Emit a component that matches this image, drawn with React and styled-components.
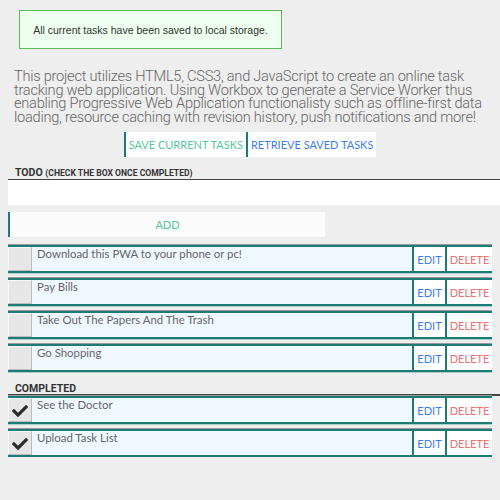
import React from 'react';
import styled, { createGlobalStyle } from 'styled-components';

const Global = createGlobalStyle`
  html, body { margin: 0; padding: 0; background: #eeeeee; overflow: hidden; }
  body { padding: 8px 0 0 8px; font-family: "Lato", "Liberation Sans", sans-serif; }
`;

const teal = '#1d7a74';

const Page = styled.div`
  width: 484px;
`;

const Alert = styled.div`
  width: 263px;
  height: 39px;
  margin: 2px 0 0 11px;
  box-sizing: border-box;
  border: 1px solid #5cb85c;
  background: #efffef;
  display: flex;
  align-items: center;
  justify-content: center;
  font-family: "Liberation Sans", Arial, sans-serif;
  font-size: 10.5px;
  color: #333;
`;

const Intro = styled.p`
  margin: 21px 0 0 6px;
  font-family: "Roboto", sans-serif;
  font-weight: 300;
  font-size: 14.6px;
  line-height: 13.5px;
  color: #666;
  letter-spacing: -0.25px;
  width: 488px;
`;

const Actions = styled.div`
  display: flex;
  justify-content: center;
  margin-top: 8px;
`;

const ActionButton = styled.button`
  height: 25px;
  border: none;
  border-left: 2px solid ${teal};
  background: #fff;
  padding: 0 3px 0 3px;
  font-family: "Lato", sans-serif;
  font-size: 11px;
  color: ${p => p.$color};
  cursor: pointer;
`;

const SectionTitle = styled.div`
  margin-top: ${p => p.$top}px;
  padding-left: 7px;
  font-family: "Roboto", "Liberation Sans", sans-serif;
  font-weight: 700;
  font-size: 10.5px;
  line-height: 10px;
  color: #333;
  border-bottom: ${p => p.$thick}px solid #444;
  margin-right: -8px;
  padding-bottom: ${p => p.$pad}px;

  small {
    font-size: 8.6px;
  }
`;

const TaskInput = styled.input`
  display: block;
  box-sizing: border-box;
  width: 492px;
  height: 25px;
  border: none;
  background: #fff;
  outline: none;
`;

const AddButton = styled.button`
  display: block;
  width: 317px;
  height: 25px;
  margin-top: 7px;
  border: none;
  border-left: 2px solid ${teal};
  background: #fbfbfb;
  font-family: "Lato", sans-serif;
  font-size: 11px;
  color: #55c79a;
`;

const List = styled.div`
  display: flex;
  flex-direction: column;
  gap: 5px;
  margin-top: ${p => p.$top}px;
`;

const Row = styled.div`
  display: flex;
  height: 28px;
  box-sizing: border-box;
  border-top: 2px solid ${teal};
  border-bottom: 2px solid ${teal};
  box-shadow: 0 -1px 0 #999, 0 1px 0 #aacfcb;
`;

const Check = styled.div`
  width: 24px;
  box-sizing: border-box;
  background: #e6e6e6;
  border: 1px solid;
  border-color: #f7f7f7 #bbb #bbb #f7f7f7;
  display: flex;
  align-items: center;
  justify-content: center;
`;

const Label = styled.div`
  flex: 1;
  background: #f0f8ff;
  padding: 0 0 0 5px;
  font-family: "Lato", sans-serif;
  font-size: 11.4px;
  color: #666;
  border-right: 2px solid ${teal};
`;

const RowButton = styled.button`
  width: ${p => p.$w}px;
  border: none;
  background: #fff;
  padding: 0;
  font-family: "Lato", sans-serif;
  font-size: 11px;
  color: ${p => p.$color};
  & + & { border-left: 2px solid ${teal}; }
`;

const Tick = () => (
  <svg width="16" height="14" viewBox="0 0 512 448">
    <path fill="#2b2b2b" d="M173.9 439.4L7.5 273c-10-10-10-26.2 0-36.2l36.2-36.2c10-10 26.2-10 36.2 0L192 312.7 432.1 72.6c10-10 26.2-10 36.2 0l36.2 36.2c10 10 10 26.2 0 36.2L210.1 439.4c-10 10-26.2 10-36.2 0z" />
  </svg>
);

const Task = ({ text, done }) => (
  <Row>
    <Check>{done && <Tick />}</Check>
    <Label>{text}</Label>
    <RowButton $w={31} $color="#3b7cf5">EDIT</RowButton>
    <RowButton $w={47} $color="#f07070">DELETE</RowButton>
  </Row>
);

const todos = [
  'Download this PWA to your phone or pc!',
  'Pay Bills',
  'Take Out The Papers And The Trash',
  'Go Shopping',
];
const completed = ['See the Doctor', 'Upload Task List'];

export default function App() {
  return (
    <Page>
      <Global />
      <Alert>All current tasks have been saved to local storage.</Alert>
      <Intro>
        This project utilizes HTML5, CSS3, and JavaScript to create an online task
        tracking web application. Using Workbox to generate a Service Worker thus
        enabling Progressive Web Application functionalisty such as offline-first data
        loading, resource caching with revision history, push notifications and more!
      </Intro>
      <Actions>
        <ActionButton $color="#55c79a">SAVE CURRENT TASKS</ActionButton>
        <ActionButton $color="#3b7cf5">RETRIEVE SAVED TASKS</ActionButton>
      </Actions>
      <SectionTitle $top={11} $thick={1} $pad={1}>
        TODO <small>(CHECK THE BOX ONCE COMPLETED)</small>
      </SectionTitle>
      <TaskInput type="text" />
      <AddButton>ADD</AddButton>
      <List $top={8}>
        {todos.map(t => <Task key={t} text={t} />)}
      </List>
      <SectionTitle $top={12} $thick={2} $pad={0}>COMPLETED</SectionTitle>
      <List $top={0}>
        {completed.map(t => <Task key={t} text={t} done />)}
      </List>
    </Page>
  );
}
